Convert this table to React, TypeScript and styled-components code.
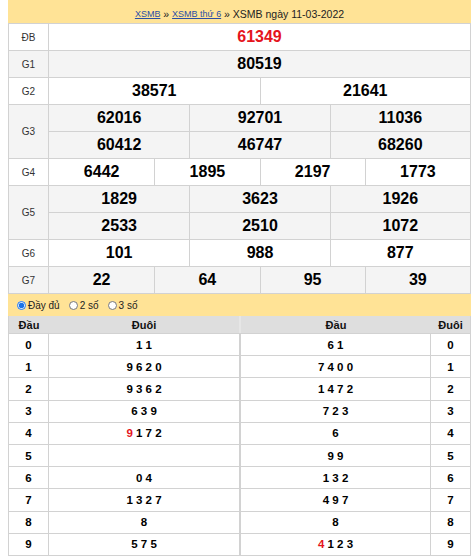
import React from "react";
import styled, { createGlobalStyle } from "styled-components";

const Global = createGlobalStyle`
  html, body { margin: 0; padding: 0; background: #fff; }
  body { font-family: "Liberation Sans", Arial, sans-serif; color: #000; }
`;

const Page = styled.div`
  width: 463px;
  margin-left: 8px;
`;

const Crumbs = styled.div`
  height: 23px;
  box-sizing: border-box;
  background: #ffe396;
  display: flex;
  justify-content: center;
  align-items: flex-end;
  padding-bottom: 3px;
  font-size: 10.5px;
  line-height: 12px;
  color: #222;
  white-space: pre;
`;

const CrumbLink = styled.a`
  font-size: 9px;
  color: #2a4ea6;
  text-decoration: underline;
`;

const Results = styled.div`
  border-left: 1px solid #d2d2d2;
  border-right: 1px solid #d2d2d2;
`;

const PrizeRow = styled.div<{ $alt?: boolean }>`
  display: grid;
  grid-template-columns: 40px 1fr;
  border-top: 1px solid #d2d2d2;
  background: ${(p) => (p.$alt ? "#f4f4f4" : "#fff")};
`;

const PrizeLabel = styled.div`
  border-right: 1px solid #d2d2d2;
  display: flex;
  align-items: center;
  justify-content: center;
  font-size: 10px;
  color: #333;
`;

const NumGrid = styled.div<{ $cols: number }>`
  display: grid;
  grid-template-columns: repeat(${(p) => p.$cols}, 1fr);
`;

const NumCell = styled.div<{ $first: boolean; $top: boolean; $red?: boolean }>`
  height: ${(p) => (p.$top ? 26 : 27)}px;
  box-sizing: border-box;
  border-left: ${(p) => (p.$first ? "none" : "1px solid #d2d2d2")};
  border-top: ${(p) => (p.$top ? "none" : "1px solid #d2d2d2")};
  display: flex;
  align-items: center;
  justify-content: center;
  font-size: 16px;
  font-weight: bold;
  color: ${(p) => (p.$red ? "#e5141c" : "#000")};
`;

const Options = styled.div`
  height: 23px;
  box-sizing: border-box;
  border-top: 1px solid #d2d2d2;
  background: #ffe396;
  display: flex;
  align-items: center;
  padding-left: 9px;
  font-size: 10px;
  color: #222;
`;

const Option = styled.label`
  display: flex;
  align-items: center;
  gap: 2px;
  margin-right: 9px;
`;

const Radio = styled.input`
  width: 9px;
  height: 9px;
  margin: 0;
  accent-color: #1a73e8;
`;

const Loto = styled.div`
  border-left: 1px solid #d2d2d2;
  border-right: 1px solid #d2d2d2;
  border-bottom: 1px solid #d2d2d2;
`;

const LotoHead = styled.div`
  display: grid;
  grid-template-columns: 40px 192px 190px 1fr;
  height: 17px;
  background: #dedede;
`;

const HeadCell = styled.div<{ $divider?: boolean }>`
  display: flex;
  align-items: center;
  justify-content: center;
  font-size: 11px;
  font-weight: bold;
  color: #111;
  box-sizing: border-box;
  border-right: ${(p) => (p.$divider ? "2px solid #e6e6e6" : "none")};
`;

const LotoRow = styled.div`
  display: grid;
  grid-template-columns: 40px 192px 190px 1fr;
  height: 22.2px;
  box-sizing: border-box;
  border-top: 1px solid #d2d2d2;
`;

const LotoCell = styled.div<{ $border?: number }>`
  display: flex;
  align-items: center;
  justify-content: center;
  font-size: 11.5px;
  font-weight: bold;
  white-space: pre;
  box-sizing: border-box;
  border-right: ${(p) => (p.$border ? `${p.$border}px solid #d2d2d2` : "none")};
`;

const Red = styled.span`
  color: #e5141c;
`;

type Prize = { label: string; cols: number; nums: string[]; red?: boolean };

const prizes: Prize[] = [
  { label: "ĐB", cols: 1, nums: ["61349"], red: true },
  { label: "G1", cols: 1, nums: ["80519"] },
  { label: "G2", cols: 2, nums: ["38571", "21641"] },
  { label: "G3", cols: 3, nums: ["62016", "92701", "11036", "60412", "46747", "68260"] },
  { label: "G4", cols: 4, nums: ["6442", "1895", "2197", "1773"] },
  { label: "G5", cols: 3, nums: ["1829", "3623", "1926", "2533", "2510", "1072"] },
  { label: "G6", cols: 3, nums: ["101", "988", "877"] },
  { label: "G7", cols: 4, nums: ["22", "64", "95", "39"] },
];

type Tail = { red?: string; rest: string };

const left: Tail[] = [
  { rest: "1 1" },
  { rest: "9 6 2 0" },
  { rest: "9 3 6 2" },
  { rest: "6 3 9" },
  { red: "9", rest: " 1 7 2" },
  { rest: "" },
  { rest: "0 4" },
  { rest: "1 3 2 7" },
  { rest: "8" },
  { rest: "5 7 5" },
];

const right: Tail[] = [
  { rest: "6 1" },
  { rest: "7 4 0 0" },
  { rest: "1 4 7 2" },
  { rest: "7 2 3" },
  { rest: "6" },
  { rest: "9 9" },
  { rest: "1 3 2" },
  { rest: "4 9 7" },
  { rest: "8" },
  { red: "4", rest: " 1 2 3" },
];

const TailText = ({ t }: { t: Tail }) => (
  <>
    {t.red && <Red>{t.red}</Red>}
    {t.rest}
  </>
);

export default function App() {
  return (
    <Page>
      <Global />
      <Crumbs>
        <CrumbLink href="#">XSMB</CrumbLink>
        {" » "}
        <CrumbLink href="#">XSMB thứ 6</CrumbLink>
        {" » XSMB ngày 11-03-2022"}
      </Crumbs>
      <Results>
        {prizes.map((p, i) => (
          <PrizeRow key={p.label} $alt={i % 2 === 1}>
            <PrizeLabel>{p.label}</PrizeLabel>
            <NumGrid $cols={p.cols}>
              {p.nums.map((n, j) => (
                <NumCell
                  key={j}
                  $first={j % p.cols === 0}
                  $top={j < p.cols}
                  $red={p.red}
                >
                  {n}
                </NumCell>
              ))}
            </NumGrid>
          </PrizeRow>
        ))}
      </Results>
      <Options>
        <Option>
          <Radio type="radio" name="mode" defaultChecked />
          Đầy đủ
        </Option>
        <Option>
          <Radio type="radio" name="mode" />
          2 số
        </Option>
        <Option>
          <Radio type="radio" name="mode" />
          3 số
        </Option>
      </Options>
      <Loto>
        <LotoHead>
          <HeadCell>Đầu</HeadCell>
          <HeadCell $divider>Đuôi</HeadCell>
          <HeadCell>Đầu</HeadCell>
          <HeadCell>Đuôi</HeadCell>
        </LotoHead>
        {left.map((l, i) => (
          <LotoRow key={i}>
            <LotoCell $border={1}>{i}</LotoCell>
            <LotoCell $border={2}>
              <TailText t={l} />
            </LotoCell>
            <LotoCell $border={1}>
              <TailText t={right[i]} />
            </LotoCell>
            <LotoCell>{i}</LotoCell>
          </LotoRow>
        ))}
      </Loto>
    </Page>
  );
}
